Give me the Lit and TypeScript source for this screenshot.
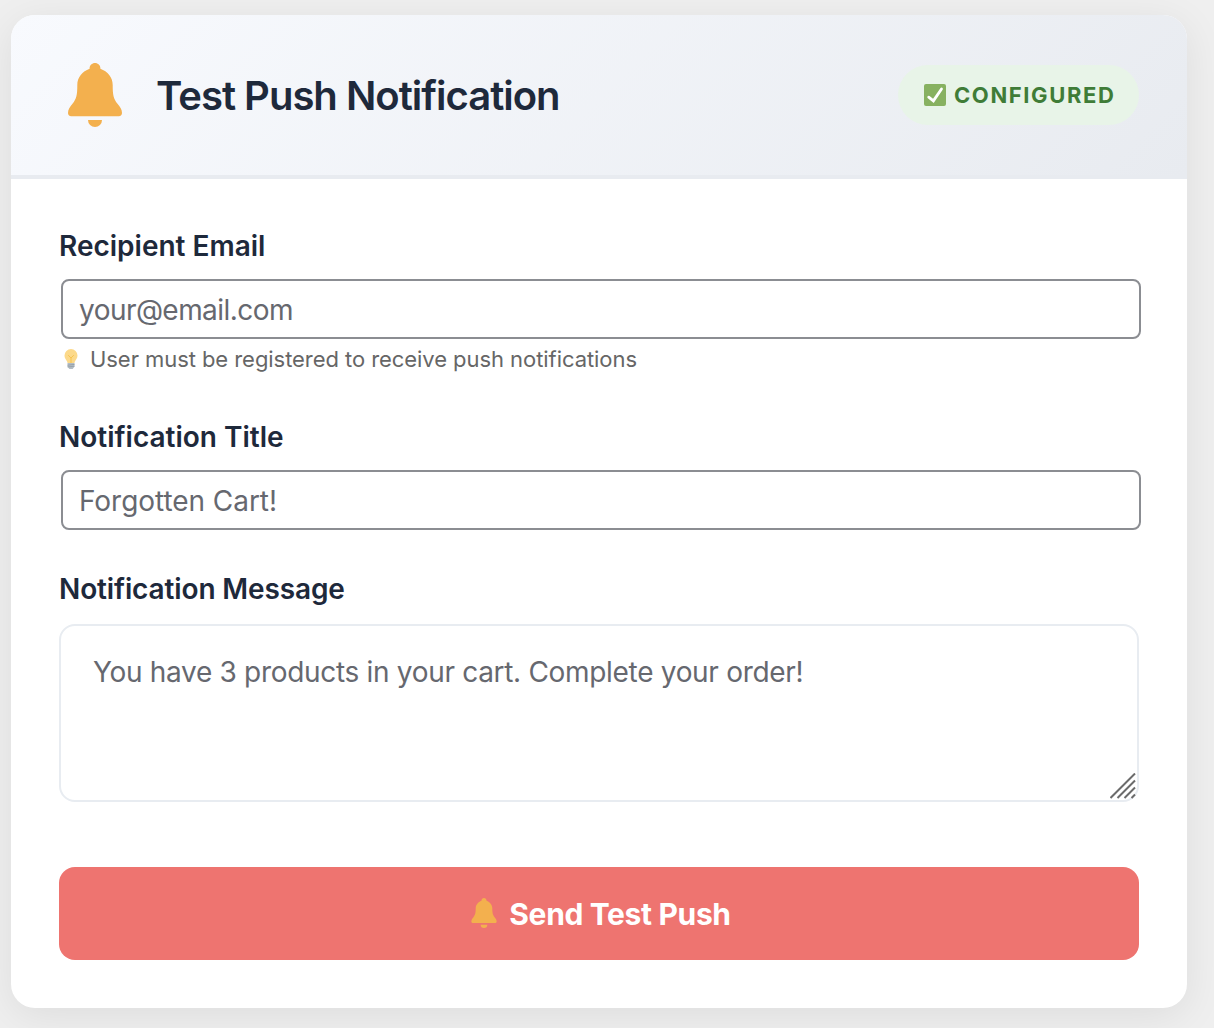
import { LitElement, html, css } from 'lit';
import { customElement, property } from 'lit/decorators.js';

@customElement('bell-icon')
export class BellIcon extends LitElement {
  static styles = css`
    :host {
      display: block;
      width: 54px;
      height: 64px;
    }
    svg {
      display: block;
      width: 100%;
      height: 100%;
      fill: #f3b04e;
    }
  `;

  protected render() {
    return html`
      <svg viewBox="0 0 54 64">
        <path
          d="M27 0c3 0 5.4 2.4 5.4 5.4v.4C39.6 8.4 44.7 14.5 44.7 22c0 10 .8 13.6 4.8 18.8 2.6 3.4 4.5 5.6 4.5 9.2 0 1.9-1.2 3.2-3.2 3.2H3.2C1.2 53.2 0 51.9 0 50c0-3.6 1.9-5.8 4.5-9.2C8.500 35.600 9.300 32 9.300 22c0-7.500 5.100-13.600 12.300-16.200v-.4C21.600 2.400 24 0 27 0z"
        />
        <path d="M20 57h14a7 7 0 0 1-14 0z" />
      </svg>
    `;
  }
}

@customElement('status-badge')
export class StatusBadge extends LitElement {
  static styles = css`
    :host {
      display: flex;
      align-items: center;
      gap: 8px;
      box-sizing: border-box;
      width: 241px;
      height: 60px;
      padding: 0 24px 0 26px;
      border-radius: 30px;
      background: #e8f4e8;
      color: #3f7c37;
      font-size: 22px;
      font-weight: 700;
      letter-spacing: 1.6px;
      white-space: nowrap;
    }
    svg {
      flex: none;
      width: 22px;
      height: 22px;
    }
  `;

  @property({ type: String })
  label = '';

  protected render() {
    return html`
      <svg viewBox="0 0 22 22">
        <rect width="22" height="22" rx="2" fill="#87b160" />
        <path
          d="M4.700 13.200l4.700 3.700L17.500 5"
          fill="none"
          stroke="#fff"
          stroke-width="2.800"
          stroke-linecap="round"
        />
      </svg>
      <span>${this.label}</span>
    `;
  }
}

@customElement('app-root')
export class AppRoot extends LitElement {
  static styles = css`
    :host {
      display: block;
      box-sizing: border-box;
      height: 1028px;
      padding: 15px 27px 20px 11px;
      overflow: hidden;
      background: #efefef;
      font-family: Inter, 'Liberation Sans', sans-serif;
      color: #1e293b;
    }
    .card {
      height: 993px;
      border-radius: 24px;
      background: #fff;
      box-shadow: 0 8px 40px rgba(0, 0, 0, 0.08);
      overflow: hidden;
    }
    .header {
      display: flex;
      align-items: center;
      box-sizing: border-box;
      height: 164px;
      padding: 0 48px 0 57px;
      border-bottom: 4px solid #e8ebf0;
      background: linear-gradient(135deg, #f8fafe 0%, #e8ebf0 100%);
    }
    h2 {
      flex: 1;
      margin: 2px 0 0 34px;
      font-size: 40px;
      font-weight: 600;
      line-height: 48px;
      letter-spacing: -1px;
      white-space: nowrap;
    }
    .form {
      display: flex;
      flex-direction: column;
      padding: 50px 48px 48px;
    }
    label {
      font-size: 28px;
      font-weight: 600;
      line-height: 34px;
    }
    input,
    textarea {
      display: block;
      box-sizing: border-box;
      margin: 0;
      background: #fff;
      color: #1e293b;
      font-family: inherit;
      font-size: 28px;
      line-height: 34px;
      outline: none;
    }
    input {
      width: 1080px;
      height: 60px;
      margin: 16px 0 0 2px;
      padding: 2px 16px 0;
      border: 2px solid #8b8d92;
      border-radius: 8px;
    }
    #email {
      letter-spacing: -0.55px;
    }
    #title {
      letter-spacing: -0.05px;
    }
    .area {
      position: relative;
      margin-top: 18px;
    }
    textarea {
      width: 1080px;
      height: 178px;
      padding: 29px 32px;
      border: 2px solid #e8ecf1;
      border-radius: 16px;
      letter-spacing: -0.31px;
      resize: none;
    }
    ::placeholder {
      color: #66686f;
      opacity: 1;
    }
    .grip {
      position: absolute;
      right: 3px;
      bottom: 3px;
      width: 26px;
      height: 26px;
      stroke: #6b6b6b;
      stroke-width: 2;
    }
    .hint {
      display: flex;
      align-items: center;
      gap: 12px;
      height: 28px;
      margin: 6px 0 0 5px;
      color: #666;
      font-size: 22px;
      letter-spacing: -0.06px;
    }
    .hint svg {
      width: 14px;
      height: 20px;
    }
    .title-label {
      margin-top: 47px;
    }
    .message-label {
      margin-top: 42px;
      letter-spacing: -0.13px;
    }
    button {
      display: flex;
      align-items: center;
      justify-content: center;
      gap: 12px;
      height: 93px;
      margin-top: 65px;
      padding: 0 0 0 4px;
      border: none;
      border-radius: 16px;
      background: #ee7470;
      color: #fff;
      font-family: inherit;
      font-size: 30px;
      font-weight: 650;
      letter-spacing: -0.35px;
    }
    .small-bell {
      width: 26px;
      height: 30px;
      margin-bottom: 2px;
    }
  `;

  protected render() {
    return html`
      <div class="card">
        <div class="header">
          <bell-icon></bell-icon>
          <h2>Test Push Notification</h2>
          <status-badge label="CONFIGURED"></status-badge>
        </div>
        <div class="form">
          <label for="email">Recipient Email</label>
          <input id="email" type="email" placeholder="your@email.com" />
          <div class="hint">
            <svg viewBox="0 0 14 20">
              <path
                d="M7 0a6.500 6.500 0 0 1 6.500 6.500c0 2.500-1.300 4-2.300 5.400-.5.700-.7 1.400-.7 2.100h-7c0-.7-.2-1.400-.7-2.100C1.800 10.500.5 9 .5 6.500A6.500 6.500 0 0 1 7 0z"
                fill="#fcd98a"
              />
              <path d="M4.200 6.200L7 9l2.800-2.800M7 9v5" fill="none" stroke="#f6c34f" />
              <path d="M3.500 14h7v3.500L8.700 20H5.300l-1.800-2.500z" fill="#b4bdc4" />
              <path d="M3.500 16.200l7-.8M3.500 18l7-.8" stroke="#8b979f" stroke-width=".7" />
            </svg>
            <span>User must be registered to receive push notifications</span>
          </div>
          <label class="title-label" for="title">Notification Title</label>
          <input id="title" type="text" placeholder="Forgotten Cart!" />
          <label class="message-label" for="message">Notification Message</label>
          <div class="area">
            <textarea
              id="message"
              placeholder="You have 3 products in your cart. Complete your order!"
            ></textarea>
            <svg class="grip" viewBox="0 0 26 26">
              <path d="M.5 25L25 .5M7.500 25L25 7.500M14.500 25L25 14.500M21.500 25L25 21.500" />
            </svg>
          </div>
          <button type="button">
            <bell-icon class="small-bell"></bell-icon>
            <span>Send Test Push</span>
          </button>
        </div>
      </div>
    `;
  }
}
